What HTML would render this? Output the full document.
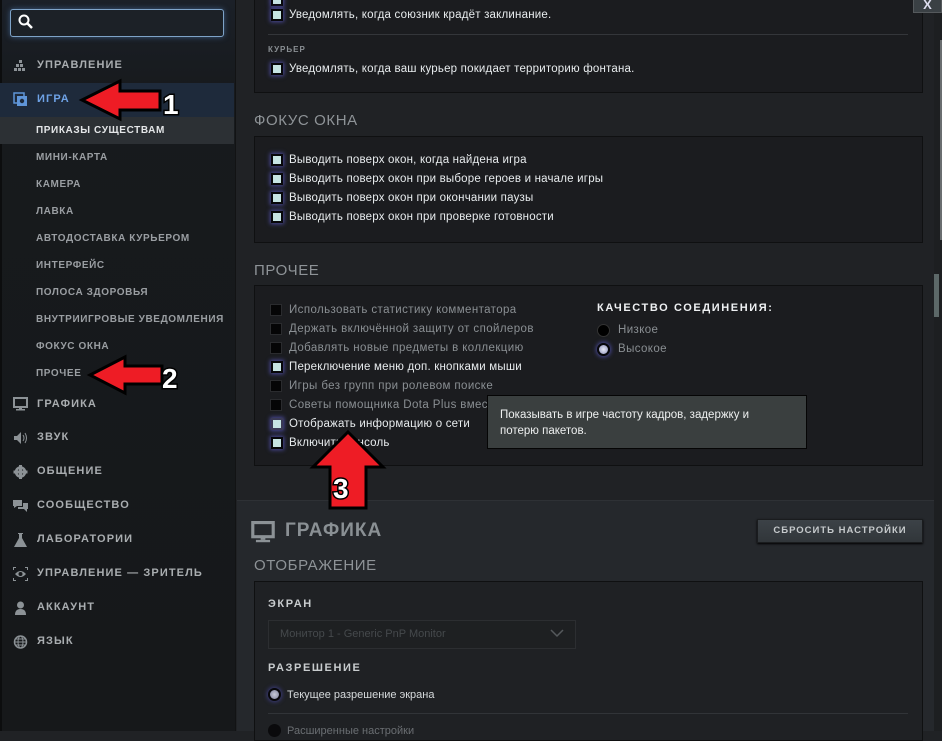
<!DOCTYPE html>
<html><head><meta charset="utf-8"><style>
*{margin:0;padding:0;box-sizing:border-box}
body{width:942px;height:731px;overflow:hidden;background:#202225;font-family:"Liberation Sans","DejaVu Sans",sans-serif;position:relative}
.a,.nav,.sub,.t,.tg,.h{position:absolute;white-space:nowrap}
#side{position:absolute;left:0;top:0;width:236px;height:731px;background:linear-gradient(180deg,#1b2028 0,#171a1d 90px,#16181a 100%);border-right:1px solid #121314}
.nav{left:37px;font-size:11px;font-weight:bold;letter-spacing:1.1px;color:#a9adb0}
.sub{left:36px;font-size:10px;font-weight:bold;letter-spacing:.6px;color:#9a9ea2}
.ic{position:absolute;left:13px;width:15px;height:14px;fill:#8c9296}
.panel{position:absolute;left:254px;width:669px;background:#1b1c1f;border:1px solid #0f1011}
.h{left:254px;font-size:15px;color:#8e9397;letter-spacing:.6px}
.cb{position:absolute;width:12px;height:12px;border:2px solid #07070a;background:#c6e4e3;box-shadow:0 0 4px 1px #4a4a9a}
.cu{position:absolute;width:12px;height:12px;border:1px solid #2a2b2e;background:#050506}
.t{font-size:11.5px;color:#e8ecee;letter-spacing:.2px}
.tg{font-size:11.5px;color:#8a8f93;letter-spacing:.4px}
</style></head><body>
<div id="side">
<div class="a" style="left:0;top:0;width:2px;height:731px;background:#0c0d0e"></div>
<div class="a" style="left:10px;top:9px;width:214px;height:28px;border:1px solid #7ea3c8;border-radius:3px;background:#1c2127;box-shadow:0 0 6px #3c5a80"></div>
<svg class="a" style="left:18px;top:14px" width="16" height="16"><circle cx="6" cy="6" r="4.5" fill="none" stroke="#fff" stroke-width="2"/><path d="M9.5 9.5L14 14" stroke="#fff" stroke-width="2.5"/></svg>
<svg class="ic" style="top:58px" viewBox="0 0 15 14"><rect x="6" y="2" width="3" height="3"/><rect x="3" y="6" width="3" height="3"/><rect x="7" y="6" width="3" height="3"/><rect x="1" y="10" width="3" height="3"/><rect x="5" y="10" width="3" height="3"/><rect x="9" y="10" width="3" height="3"/></svg>
<div class="nav" style="top:59px">УПРАВЛЕНИЕ</div>
<div class="a" style="left:0;top:83px;width:234px;height:34px;background:#1e2a3b"></div>
<svg class="ic" style="top:92px;fill:none" viewBox="0 0 15 14"><rect x="1" y="1" width="10" height="10" stroke="#5f95d8" stroke-width="1.5"/><rect x="4" y="4" width="10" height="10" fill="#5f95d8"/><circle cx="9" cy="9" r="2.2" fill="#1e2a3b"/></svg>
<div class="nav" style="top:93px;color:#6ea2e6">ИГРА</div>
<div class="a" style="left:0;top:117px;width:234px;height:27px;background:#2c3034"></div>
<div class="sub" style="top:125px;color:#e4e6e8">ПРИКАЗЫ СУЩЕСТВАМ</div>
<div class="sub" style="top:152px">МИНИ-КАРТА</div>
<div class="sub" style="top:179px">КАМЕРА</div>
<div class="sub" style="top:206px">ЛАВКА</div>
<div class="sub" style="top:233px">АВТОДОСТАВКА КУРЬЕРОМ</div>
<div class="sub" style="top:260px">ИНТЕРФЕЙС</div>
<div class="sub" style="top:287px">ПОЛОСА ЗДОРОВЬЯ</div>
<div class="sub" style="top:314px">ВНУТРИИГРОВЫЕ УВЕДОМЛЕНИЯ</div>
<div class="sub" style="top:341px">ФОКУС ОКНА</div>
<div class="sub" style="top:368px">ПРОЧЕЕ</div>
<svg class="ic" style="top:397px" viewBox="0 0 15 14"><rect x="1" y="1" width="13" height="9" fill="none" stroke="#8c9296" stroke-width="2"/><rect x="6" y="10" width="3" height="2"/><rect x="3" y="12" width="9" height="1.5"/></svg>
<div class="nav" style="top:398px">ГРАФИКА</div>
<svg class="ic" style="top:431px" viewBox="0 0 15 14"><path d="M1 5h3l4-4v12l-4-4H1z"/><path d="M10 4q2 3 0 6M12 2q3 5 0 10" stroke="#8c9296" fill="none" stroke-width="1"/></svg>
<div class="nav" style="top:431px">ЗВУК</div>
<svg class="ic" style="top:465px" viewBox="0 0 15 14"><circle cx="7.5" cy="7" r="4.5" fill="none" stroke="#8c9296" stroke-width="2.5"/><rect x="6" y="0" width="3" height="14"/><rect x="0.5" y="5.5" width="14" height="3"/></svg>
<div class="nav" style="top:465px">ОБЩЕНИЕ</div>
<svg class="ic" style="top:499px" viewBox="0 0 15 14"><path d="M0 1h9v6H4l-3 2V7H0z"/><path d="M10 4h5v6h-1v3l-3-3H5V8h5z"/></svg>
<div class="nav" style="top:499px">СООБЩЕСТВО</div>
<svg class="ic" style="top:533px" viewBox="0 0 15 14"><path d="M5 0h5v1H9v4l5 9H1l5-9V1H5z"/></svg>
<div class="nav" style="top:533px">ЛАБОРАТОРИИ</div>
<svg class="ic" style="top:567px" viewBox="0 0 15 14"><path d="M0 0h3v1H1v2H0zM12 0h3v3h-1V1h-2zM0 11h1v2h2v1H0zM14 11h1v3h-3v-1h2z"/><path d="M2 7q5.5-6 11 0q-5.5 6-11 0z"/><circle cx="7.5" cy="7" r="2" fill="#16181a"/></svg>
<div class="nav" style="top:567px">УПРАВЛЕНИЕ — ЗРИТЕЛЬ</div>
<svg class="ic" style="top:601px" viewBox="0 0 15 14"><circle cx="7.5" cy="4" r="3.5"/><path d="M2 14q0-6 5.5-6t5.5 6z"/></svg>
<div class="nav" style="top:601px">АККАУНТ</div>
<svg class="ic" style="top:635px;fill:none" viewBox="0 0 15 14"><circle cx="7.5" cy="7" r="6" stroke="#8c9296" stroke-width="1.5"/><ellipse cx="7.5" cy="7" rx="2.5" ry="6" stroke="#8c9296"/><path d="M1.5 7h12M2.5 4h10M2.5 10h10" stroke="#8c9296"/></svg>
<div class="nav" style="top:635px">ЯЗЫК</div>
</div>

<div class="a" style="left:237px;top:500px;width:697px;height:231px;background:#25282c;border-top:1px solid #2e3135"></div>
<div class="panel" style="top:-5px;height:98px"></div>
<div class="cb" style="left:271px;top:-6px"></div>
<div class="cb" style="left:271px;top:9px"></div><div class="t" style="left:289px;top:9px">Уведомлять, когда союзник крадёт заклинание.</div>
<div class="a" style="left:268px;top:34px;width:640px;height:1px;background:#34363a"></div>
<div class="a" style="left:268px;top:45px;font-size:8px;font-weight:bold;letter-spacing:1px;color:#8a8f93">КУРЬЕР</div>
<div class="cb" style="left:271px;top:63px"></div><div class="t" style="left:289px;top:63px">Уведомлять, когда ваш курьер покидает территорию фонтана.</div>

<div class="h" style="top:112px">ФОКУС ОКНА</div>
<div class="panel" style="top:136px;height:107px"></div>
<div class="cb" style="left:271px;top:154px"></div><div class="t" style="left:289px;top:154px">Выводить поверх окон, когда найдена игра</div>
<div class="cb" style="left:271px;top:173px"></div><div class="t" style="left:289px;top:173px">Выводить поверх окон при выборе героев и начале игры</div>
<div class="cb" style="left:271px;top:192px"></div><div class="t" style="left:289px;top:192px">Выводить поверх окон при окончании паузы</div>
<div class="cb" style="left:271px;top:211px"></div><div class="t" style="left:289px;top:211px">Выводить поверх окон при проверке готовности</div>

<div class="h" style="top:262px">ПРОЧЕЕ</div>
<div class="panel" style="top:285px;height:181px"></div>
<div class="cu" style="left:270px;top:304px"></div><div class="tg" style="left:289px;top:304px">Использовать статистику комментатора</div>
<div class="cu" style="left:270px;top:323px"></div><div class="tg" style="left:289px;top:323px">Держать включённой защиту от спойлеров</div>
<div class="cu" style="left:270px;top:342px"></div><div class="tg" style="left:289px;top:342px">Добавлять новые предметы в коллекцию</div>
<div class="cb" style="left:271px;top:361px"></div><div class="t" style="left:289px;top:361px">Переключение меню доп. кнопками мыши</div>
<div class="cu" style="left:270px;top:380px"></div><div class="tg" style="left:289px;top:380px">Игры без групп при ролевом поиске</div>
<div class="cu" style="left:270px;top:399px"></div><div class="tg" style="left:289px;top:399px">Советы помощника Dota Plus вмест</div>
<div class="cb" style="left:271px;top:418px;border-color:#3a3a55"></div><div class="t" style="left:289px;top:418px">Отображать информацию о сети</div>
<div class="cb" style="left:271px;top:437px"></div><div class="t" style="left:289px;top:437px">Включить консоль</div>

<div class="a" style="left:597px;top:302px;font-size:11px;font-weight:bold;letter-spacing:1.6px;color:#eef0f2">КАЧЕСТВО СОЕДИНЕНИЯ:</div>
<div class="a" style="left:597px;top:324px;width:13px;height:13px;border-radius:50%;background:#000;border:1px solid #333"></div>
<div class="tg" style="left:618px;top:324px">Низкое</div>
<div class="a" style="left:597px;top:343px;width:13px;height:13px;border-radius:50%;background:radial-gradient(#e8eaf6,#8c90b8);border:2px solid #07070a;box-shadow:0 0 4px 1px #4a4a9a"></div>
<div class="tg" style="left:618px;top:343px">Высокое</div>

<div class="a" style="left:487px;top:395px;width:320px;height:54px;background:#3a3f3f;border:1px solid #050505"></div>
<div class="a" style="left:500px;top:407px;font-size:11.5px;line-height:16px;color:#eef0f0">Показывать в игре частоту кадров, задержку и<br>потерю пакетов.</div>

<svg class="a" style="left:251px;top:521px" width="24" height="22" viewBox="0 0 15 14"><rect x="1" y="1" width="13" height="9" fill="none" stroke="#8c9296" stroke-width="2"/><rect x="6" y="10" width="3" height="2" fill="#8c9296"/><rect x="3" y="12" width="9" height="1.5" fill="#8c9296"/></svg>
<div class="a" style="left:285px;top:520px;font-size:19px;font-weight:bold;letter-spacing:1px;color:#8a9094">ГРАФИКА</div>
<div class="a" style="left:757px;top:519px;width:166px;height:24px;background:linear-gradient(#3c4247,#31363a);border:1px solid #1a1c1e;box-shadow:0 1px 2px #000;font-size:9.5px;font-weight:bold;letter-spacing:1px;color:#c6cacc;text-align:center;line-height:22px">СБРОСИТЬ НАСТРОЙКИ</div>
<div class="h" style="top:557px">ОТОБРАЖЕНИЕ</div>
<div class="panel" style="top:581px;height:160px;background:#1f2124"></div>
<div class="a" style="left:268px;top:598px;font-size:11px;font-weight:bold;letter-spacing:1.6px;color:#c8ccce">ЭКРАН</div>
<div class="a" style="left:268px;top:620px;width:308px;height:29px;background:#1e2022;border:1px solid #2c2e31"></div>
<div class="a" style="left:280px;top:628px;font-size:11px;color:#45494c">Монитор 1 - Generic PnP Monitor</div>
<svg class="a" style="left:550px;top:628px" width="14" height="10"><path d="M1 2l6 6 6-6" stroke="#55595c" stroke-width="1.5" fill="none"/></svg>
<div class="a" style="left:268px;top:662px;font-size:11px;font-weight:bold;letter-spacing:1.6px;color:#c8ccce">РАЗРЕШЕНИЕ</div>
<div class="a" style="left:268px;top:688px;width:13px;height:13px;border-radius:50%;background:radial-gradient(#c8cad8,#7a7e98);border:2px solid #07070a;box-shadow:0 0 4px 1px #3c3c80"></div>
<div class="a" style="left:287px;top:689px;font-size:11px;color:#d6dadc">Текущее разрешение экрана</div>
<div class="a" style="left:268px;top:713px;width:640px;height:1px;background:#313438"></div>
<div class="a" style="left:268px;top:724px;width:13px;height:13px;border-radius:50%;background:#0a0a0c"></div>
<div class="a" style="left:287px;top:725px;font-size:11px;color:#6a6e72">Расширенные настройки</div>

<div class="a" style="left:934px;top:0;width:8px;height:731px;background:#1d1f21"></div>
<div class="a" style="left:940px;top:40px;width:2px;height:200px;background:#6a6e70"></div>
<div class="a" style="left:934px;top:274px;width:5px;height:43px;background:#5c6868"></div>
<div class="a" style="left:913px;top:-2px;width:29px;height:15px;background:#3a4044;border:1px solid #55595c;color:#dde;font-size:13px;font-weight:bold;text-align:center;line-height:11px">X</div>

<svg class="a" style="left:0;top:0" width="942" height="731">
<g fill="#ee1c25" stroke="#000" stroke-width="3" stroke-linejoin="miter">
<polygon points="82,100 120,81 120,91 160,91 160,110 120,110 120,119"/>
<polygon points="90,375 125,357 125,366 162,366 162,384 125,384 125,393"/>
<polygon points="348,432 383,467 366,467 366,508 330,508 330,467 313,467"/>
</g>
<g font-family="Liberation Sans,sans-serif" font-weight="bold" font-size="28" fill="#fff" stroke="#000" stroke-width="3" paint-order="stroke">
<text x="163" y="114">1</text>
<text x="162" y="388">2</text>
<text x="333" y="498">3</text>
</g>
</svg>
</body></html>
